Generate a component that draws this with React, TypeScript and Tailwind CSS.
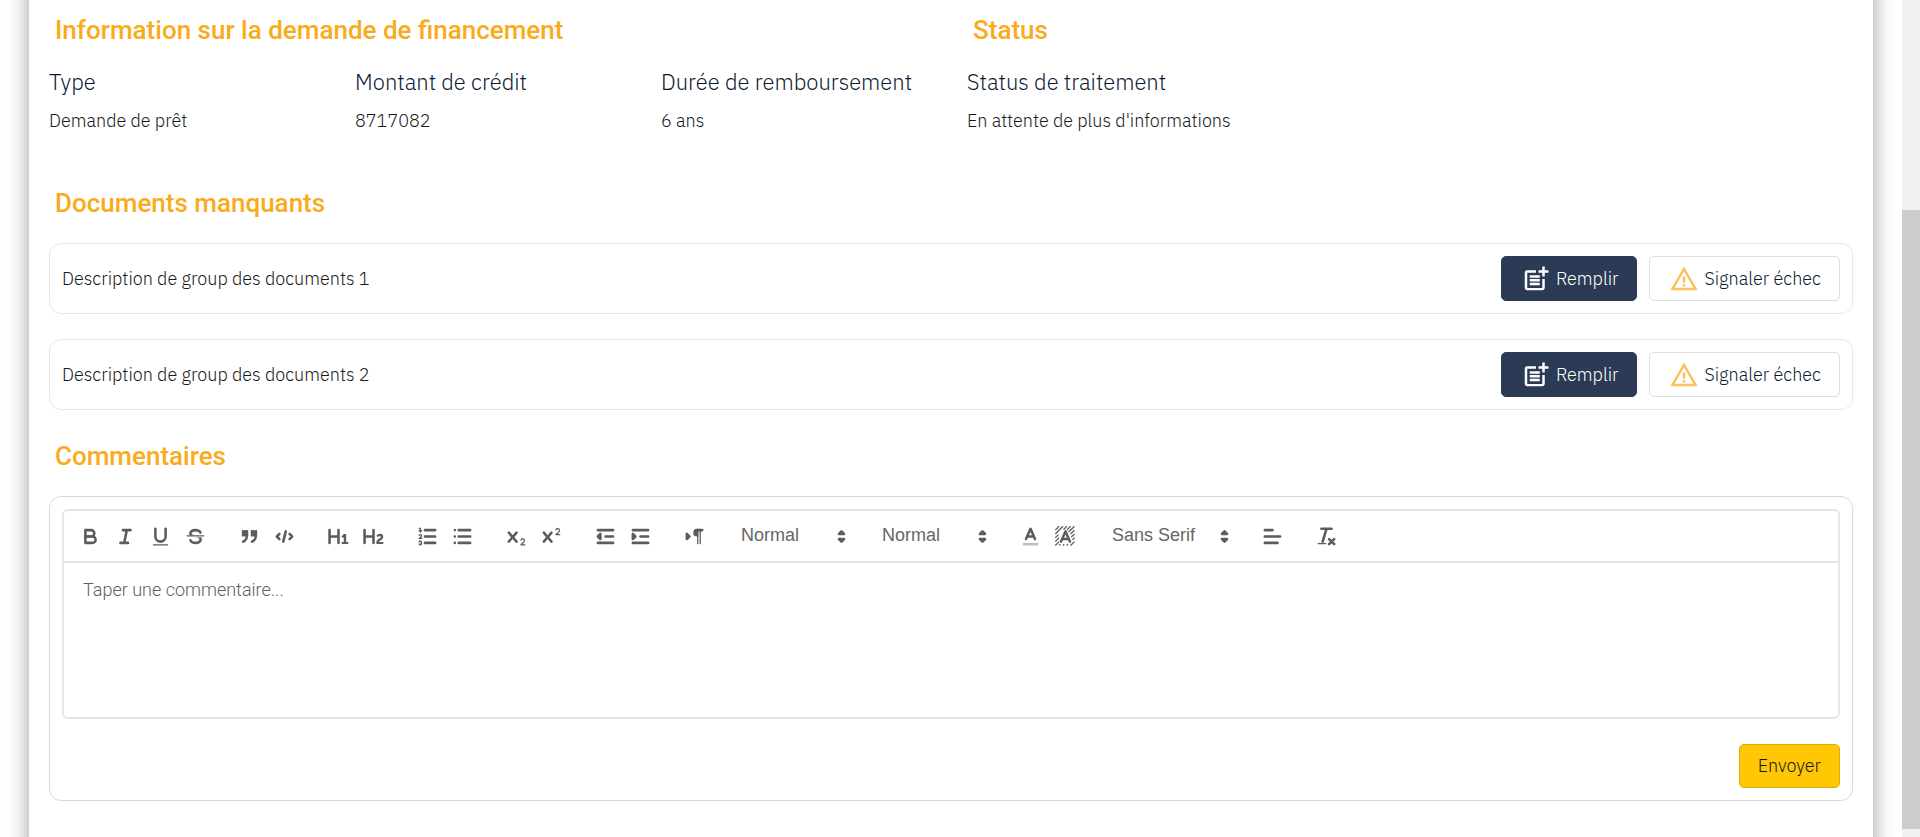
import React, { useState } from "react";
import { MdPostAdd, MdWarningAmber } from "react-icons/md";

function Heading({ children }: { children: React.ReactNode }) {
  return (
    <h2 className="px-1.5 font-[Roboto,sans-serif] text-[26px] leading-8 font-medium text-[#f9ab1b]">{children}</h2>
  );
}

function Field({ label, value }: { label: string; value: string }) {
  return (
    <div className="whitespace-nowrap">
      <dt className="text-[22px] leading-8 text-[#0b1a33]">{label}</dt>
      <dd className="pt-[9px] text-lg leading-7 text-[#16191c]">{value}</dd>
    </div>
  );
}

function DocumentRow({ label }: { label: string }) {
  return (
    <li className="flex items-center justify-between rounded-xl border border-[#e8e8e8] px-3 py-3">
      <span className="text-lg leading-7 text-[#16191c]">{label}</span>
      <div className="flex gap-3">
        <button
          type="button"
          className="flex h-[45px] items-center gap-[5px] rounded-[5px] border border-[#2b3b55] bg-[#2b3b55] pr-[18px] pl-[19px] text-lg text-white"
        >
          <MdPostAdd className="size-[30px]" />
          Remplir
        </button>
        <button
          type="button"
          className="flex h-[45px] items-center gap-[5px] rounded-[5px] border border-[#dcdfe3] pr-[18px] pl-[19px] text-lg text-[#0b1a33]"
        >
          <MdWarningAmber className="size-[30px] text-[#fbc15f]" />
          Signaler échec
        </button>
      </div>
    </li>
  );
}

const line = { fill: "none", stroke: "currentColor", strokeWidth: 2, strokeLinecap: "round", strokeLinejoin: "round" } as const;
const thin = { ...line, strokeWidth: 1 } as const;

const icons: Record<string, React.ReactNode> = {
  Gras: (
    <g {...line}>
      <path d="M5,4H9.5A2.5,2.5,0,0,1,12,6.5v0A2.5,2.5,0,0,1,9.5,9H5A0,0,0,0,1,5,9V4A0,0,0,0,1,5,4Z" />
      <path d="M5,9h5.5A2.5,2.5,0,0,1,13,11.5v0A2.5,2.5,0,0,1,10.5,14H5a0,0,0,0,1,0,0V9A0,0,0,0,1,5,9Z" />
    </g>
  ),
  Italique: <path {...line} d="M7,4H13M5,14H11M8,14L10,4" />,
  Souligné: (
    <g>
      <path {...line} d="M5,3V9a4.012,4.012,0,0,0,4,4H9a4.012,4.012,0,0,0,4-4V3" />
      <rect fill="currentColor" height="1" rx="0.5" ry="0.5" width="12" x="3" y="15" />
    </g>
  ),
  Barré: (
    <g>
      <path {...thin} d="M15.5,8.5H2.5" />
      <path fill="currentColor" d="M9.007,8C6.542,7.791,6,7.519,6,6.5,6,5.792,7.283,5,9,5c1.571,0,2.765.679,2.969,1.309a1,1,0,0,0,1.9-.617C13.356,4.106,11.354,3,9,3,6.2,3,4,4.538,4,6.5a3.2,3.2,0,0,0,.5,1.843Z" />
      <path fill="currentColor" d="M8.984,10C11.457,10.208,12,10.479,12,11.5c0,0.708-1.283,1.5-3,1.5-1.571,0-2.765-.679-2.969-1.309a1,1,0,1,0-1.9.617C4.644,13.894,6.646,15,9,15c2.8,0,5-1.538,5-3.5a3.2,3.2,0,0,0-.5-1.843Z" />
    </g>
  ),
  Citation: (
    <g fill="currentColor" stroke="currentColor" strokeWidth="2">
      <rect height="3" width="3" x="4" y="5" />
      <rect height="3" width="3" x="11" y="5" />
      <path d="M7,8c0,4.031-3,5-3,5" fill="none" strokeLinecap="round" />
      <path d="M14,8c0,4.031-3,5-3,5" fill="none" strokeLinecap="round" />
    </g>
  ),
  Code: <path {...line} d="M5,7L3,9L5,11M13,7L15,9L13,11M10,5L8,13" />,
  "Titre 1": <path fill="currentColor" d="M10,4V14a1,1,0,0,1-2,0V10H3v4a1,1,0,0,1-2,0V4A1,1,0,0,1,3,4V8H8V4a1,1,0,0,1,2,0Zm6.06787,9.209H14.98975V7.59863a.54085.54085,0,0,0-.605-.60547h-.62744a1.01119,1.01119,0,0,0-.748.29688L11.645,8.56641a.5435.5435,0,0,0-.022.8584l.28613.30762a.53861.53861,0,0,0,.84717.0332l.09912-.08789a1.2137,1.2137,0,0,0,.2417-.35254h.02246s-.01123.30859-.01123.60547V13.209H12.041a.54085.54085,0,0,0-.605.60547v.43945a.54085.54085,0,0,0,.605.60547h4.02686a.54085.54085,0,0,0,.605-.60547v-.43945A.54085.54085,0,0,0,16.06787,13.209Z" />,
  "Titre 2": <path fill="currentColor" d="M16.73975,13.81445v.43945a.54085.54085,0,0,1-.605.60547H11.855a.58392.58392,0,0,1-.64893-.60547V14.0127c0-2.90527,3.39941-3.42187,3.39941-4.55469a.77675.77675,0,0,0-.84717-.78125,1.17684,1.17684,0,0,0-.83594.38477c-.2749.26367-.561.374-.85791.13184l-.4292-.34082c-.30811-.24219-.38525-.51758-.1543-.81445a2.97155,2.97155,0,0,1,2.45361-1.17676,2.45393,2.45393,0,0,1,2.68408,2.40918c0,2.45312-3.1792,2.92676-3.27832,3.93848h2.79443A.54085.54085,0,0,1,16.73975,13.81445ZM9,3A.99974.99974,0,0,0,8,4V8H3V4A1,1,0,0,0,1,4V14a1,1,0,0,0,2,0V10H8v4a1,1,0,0,0,2,0V4A.99974.99974,0,0,0,9,3Z" />,
  "Liste numérotée": (
    <g>
      <path {...line} d="M7,4H15M7,9H15M7,14H15" />
      <path {...thin} d="M2.5,4.5H4.5" />
      <path fill="currentColor" d="M3.5,6A0.5,0.5,0,0,1,3,5.5V3.085l-0.276.138A0.5,0.5,0,0,1,2.053,3c-0.124-.247-0.023-0.324.224-0.447l1-.5A0.5,0.5,0,0,1,4,2.5v3A0.5,0.5,0,0,1,3.5,6Z" />
      <path {...thin} d="M4.5,10.5h-2c0-.234,1.85-1.076,1.85-2.234A0.959,0.959,0,0,0,2.5,8.156" />
      <path {...thin} d="M2.5,14.846a0.959,0.959,0,0,0,1.85-.109A0.7,0.7,0,0,0,3.75,14a0.688,0.688,0,0,0,.6-0.736,0.959,0.959,0,0,0-1.85-.109" />
    </g>
  ),
  "Liste à puces": <path {...line} d="M6,4H15M6,9H15M6,14H15M3,4H3M3,9H3M3,14H3" />,
  Indice: (
    <g fill="currentColor">
      <path d="M15.5,15H13.861a3.858,3.858,0,0,0,1.914-2.975,1.8,1.8,0,0,0-1.6-1.751A1.921,1.921,0,0,0,12.021,11.7a0.50013,0.50013,0,1,0,.957.291h0a0.914,0.914,0,0,1,1.053-.725,0.81,0.81,0,0,1,.744.762c0,1.076-1.16971,1.86982-1.93971,2.43082A1.45639,1.45639,0,0,0,12,15.5a0.5,0.5,0,0,0,.5.5h3A0.5,0.5,0,0,0,15.5,15Z" />
      <path d="M9.65,5.241a1,1,0,0,0-1.409.108L6,7.964,3.759,5.349A1,1,0,0,0,2.192,6.59178Q2.21541,6.6213,2.241,6.649L4.684,9.5,2.241,12.35A1,1,0,0,0,3.71,13.70722q0.02557-.02768.049-0.05722L6,11.036,8.241,13.65a1,1,0,1,0,1.567-1.24277Q9.78459,12.3777,9.759,12.35L7.316,9.5,9.759,6.651A1,1,0,0,0,9.65,5.241Z" />
    </g>
  ),
  Exposant: (
    <g fill="currentColor">
      <path d="M15.5,7H13.861a4.015,4.015,0,0,0,1.914-2.975,1.8,1.8,0,0,0-1.6-1.751A1.922,1.922,0,0,0,12.021,3.7a0.5,0.5,0,1,0,.957.291,0.917,0.917,0,0,1,1.053-.725,0.81,0.81,0,0,1,.744.762c0,1.077-1.164,1.925-1.934,2.486A1.423,1.423,0,0,0,12,7.5a0.5,0.5,0,0,0,.5.5h3A0.5,0.5,0,0,0,15.5,7Z" />
      <path d="M9.651,5.241a1,1,0,0,0-1.41.108L6,7.964,3.759,5.349a1,1,0,1,0-1.519,1.3L4.683,9.5,2.241,12.35a1,1,0,1,0,1.519,1.3L6,11.036,8.241,13.65a1,1,0,0,0,1.519-1.3L7.317,9.5,9.759,6.651A1,1,0,0,0,9.651,5.241Z" />
    </g>
  ),
  "Diminuer le retrait": (
    <g {...line}>
      <path d="M3,14H15M3,4H15M9,9H15" />
      <path fill="currentColor" d="M5,7V11L3,9Z" />
    </g>
  ),
  "Augmenter le retrait": (
    <g {...line}>
      <path d="M3,14H15M3,4H15M9,9H15" />
      <path fill="currentColor" d="M3,7V11L5,9Z" />
    </g>
  ),
  "Sens du texte": (
    <g>
      <path {...line} fill="currentColor" d="M3,11L5,9L3,7V11Z" />
      <path {...line} fill="currentColor" d="M15,4H11" />
      <path fill="currentColor" d="M11,3a3,3,0,0,0,0,6h1V3H11Z" />
      <rect fill="currentColor" height="11" width="1" x="11" y="4" />
      <rect fill="currentColor" height="11" width="1" x="13" y="4" />
    </g>
  ),
  "Couleur du texte": (
    <g>
      <path {...line} className="opacity-40" strokeLinecap="butt" d="M3,15H15" />
      <path {...line} d="M5.5,11L9,3L12.5,11M11.63,9H6.38" />
    </g>
  ),
  "Couleur de fond": (
    <g>
      <path {...thin} d="M1,4L4,1M1,7L7,1M1,10L3.5,7.5M7.5,3.5L10,1M1,13L4,10M10,4L13,1M1,16L4,13M11.5,5.5L16,1M13,7L16,4M13.500,9.500L16,7M14.500,11.500L16,10M4,16L5,15M7,16L8,15M10,16L11,15M13,16L16,13" strokeLinecap="butt" />
      <path {...line} d="M5.5,13L9,5L12.5,13M11.63,11H6.38" />
    </g>
  ),
  Alignement: <path {...line} d="M3,9H15M3,14H13M3,4H9" />,
  "Effacer le format": (
    <g>
      <path {...line} d="M5,3H13M6,13L9,3M11,11L15,15M15,11L11,15" />
      <rect fill="currentColor" height="1" rx="0.5" ry="0.5" width="7" x="2" y="14" />
    </g>
  ),
};

function Tools({ names }: { names: string[] }) {
  return (
    <div className="flex">
      {names.map((name) => (
        <button key={name} type="button" aria-label={name} className="flex h-[30px] w-[35px] items-center justify-center">
          <svg viewBox="0 0 18 18" className="size-[23px]" aria-hidden="true">
            {icons[name]}
          </svg>
        </button>
      ))}
    </div>
  );
}

function Picker({ label, options, width }: { label: string; options: string[]; width: string }) {
  return (
    <div className={`relative ${width}`}>
      <select
        aria-label={label}
        className="h-[30px] w-full appearance-none bg-transparent pb-0.5 pl-2.5 font-['Liberation_Sans',Arial,sans-serif] text-lg leading-7 font-medium text-[#666] outline-none"
      >
        {options.map((option) => (
          <option key={option}>{option}</option>
        ))}
      </select>
      <svg viewBox="0 0 18 18" className="pointer-events-none absolute top-1 right-0 size-[23px]" aria-hidden="true">
        <path {...line} fill="currentColor" d="M7,11L9,13L11,11ZM7,7L9,5L11,7Z" />
      </svg>
    </div>
  );
}

function Comments() {
  const [comment, setComment] = useState("");
  return (
    <form className="rounded-xl border border-[#dadada] p-3" onSubmit={(event) => event.preventDefault()}>
      <div className="rounded-md border-2 border-[#e6e6e6]">
        <div
          className="flex flex-wrap gap-[19px] border-b-2 border-[#e6e6e6] px-[9px] py-2.5 text-[#5c5c5c]"
          role="toolbar"
          aria-label="Mise en forme"
        >
          <Tools names={["Gras", "Italique", "Souligné", "Barré"]} />
          <Tools names={["Citation", "Code"]} />
          <Tools names={["Titre 1", "Titre 2"]} />
          <Tools names={["Liste numérotée", "Liste à puces"]} />
          <Tools names={["Indice", "Exposant"]} />
          <Tools names={["Diminuer le retrait", "Augmenter le retrait"]} />
          <Tools names={["Sens du texte"]} />
          <Picker label="Taille" options={["Normal", "Small", "Large", "Huge"]} width="w-[122px]" />
          <Picker label="Titre" options={["Normal", "Heading 1", "Heading 2"]} width="w-[122px]" />
          <Tools names={["Couleur du texte", "Couleur de fond"]} />
          <Picker label="Police" options={["Sans Serif", "Serif", "Monospace"]} width="w-[134px]" />
          <Tools names={["Alignement"]} />
          <Tools names={["Effacer le format"]} />
        </div>
        <textarea
          aria-label="Commentaire"
          placeholder="Taper une commentaire..."
          value={comment}
          onChange={(event) => setComment(event.target.value)}
          className="block h-[154px] w-full resize-none px-[19px] py-[15px] font-[Roboto,sans-serif] text-lg leading-6 font-light text-[#212529] outline-none placeholder:text-[#5f5f5f]"
        />
      </div>
      <div className="mt-[25px] flex justify-end">
        <button type="submit" className="h-11 rounded-[5px] border border-[#d9ac0c] bg-[#ffc704] px-[18px] text-lg text-[#16191c]">
          Envoyer
        </button>
      </div>
    </form>
  );
}

export default function App() {
  return (
    <div className="flex min-h-screen overflow-hidden bg-white font-['IBM_Plex_Sans',Roboto,sans-serif] font-light">
      <main className="mx-[29px] -my-8 flex-1 px-5 pt-[46px] pb-16 shadow-[0_0_20px_rgba(0,0,0,0.4)]">
        <div className="grid grid-cols-6 gap-x-8">
          <div className="col-span-3">
            <Heading>Information sur la demande de financement</Heading>
          </div>
          <div className="col-span-3">
            <Heading>Status</Heading>
          </div>
        </div>
        <dl className="mt-5 grid grid-cols-6 gap-x-8">
          <Field label="Type" value="Demande de prêt" />
          <Field label="Montant de crédit" value="8717082" />
          <Field label="Durée de remboursement" value="6 ans" />
          <Field label="Status de traitement" value="En attente de plus d'informations" />
        </dl>
        <section className="mt-[52px]">
          <Heading>Documents manquants</Heading>
          <ul className="mt-6 flex flex-col gap-[25px]">
            <DocumentRow label="Description de group des documents 1" />
            <DocumentRow label="Description de group des documents 2" />
          </ul>
        </section>
        <section className="mt-[30px]">
          <Heading>Commentaires</Heading>
          <div className="mt-6">
            <Comments />
          </div>
        </section>
      </main>
      <div className="flex w-[18px] flex-col bg-[#f1f1f1] pt-[210px] pb-2" aria-hidden="true">
        <div className="flex-1 bg-[#cdcdcd]" />
      </div>
    </div>
  );
}
